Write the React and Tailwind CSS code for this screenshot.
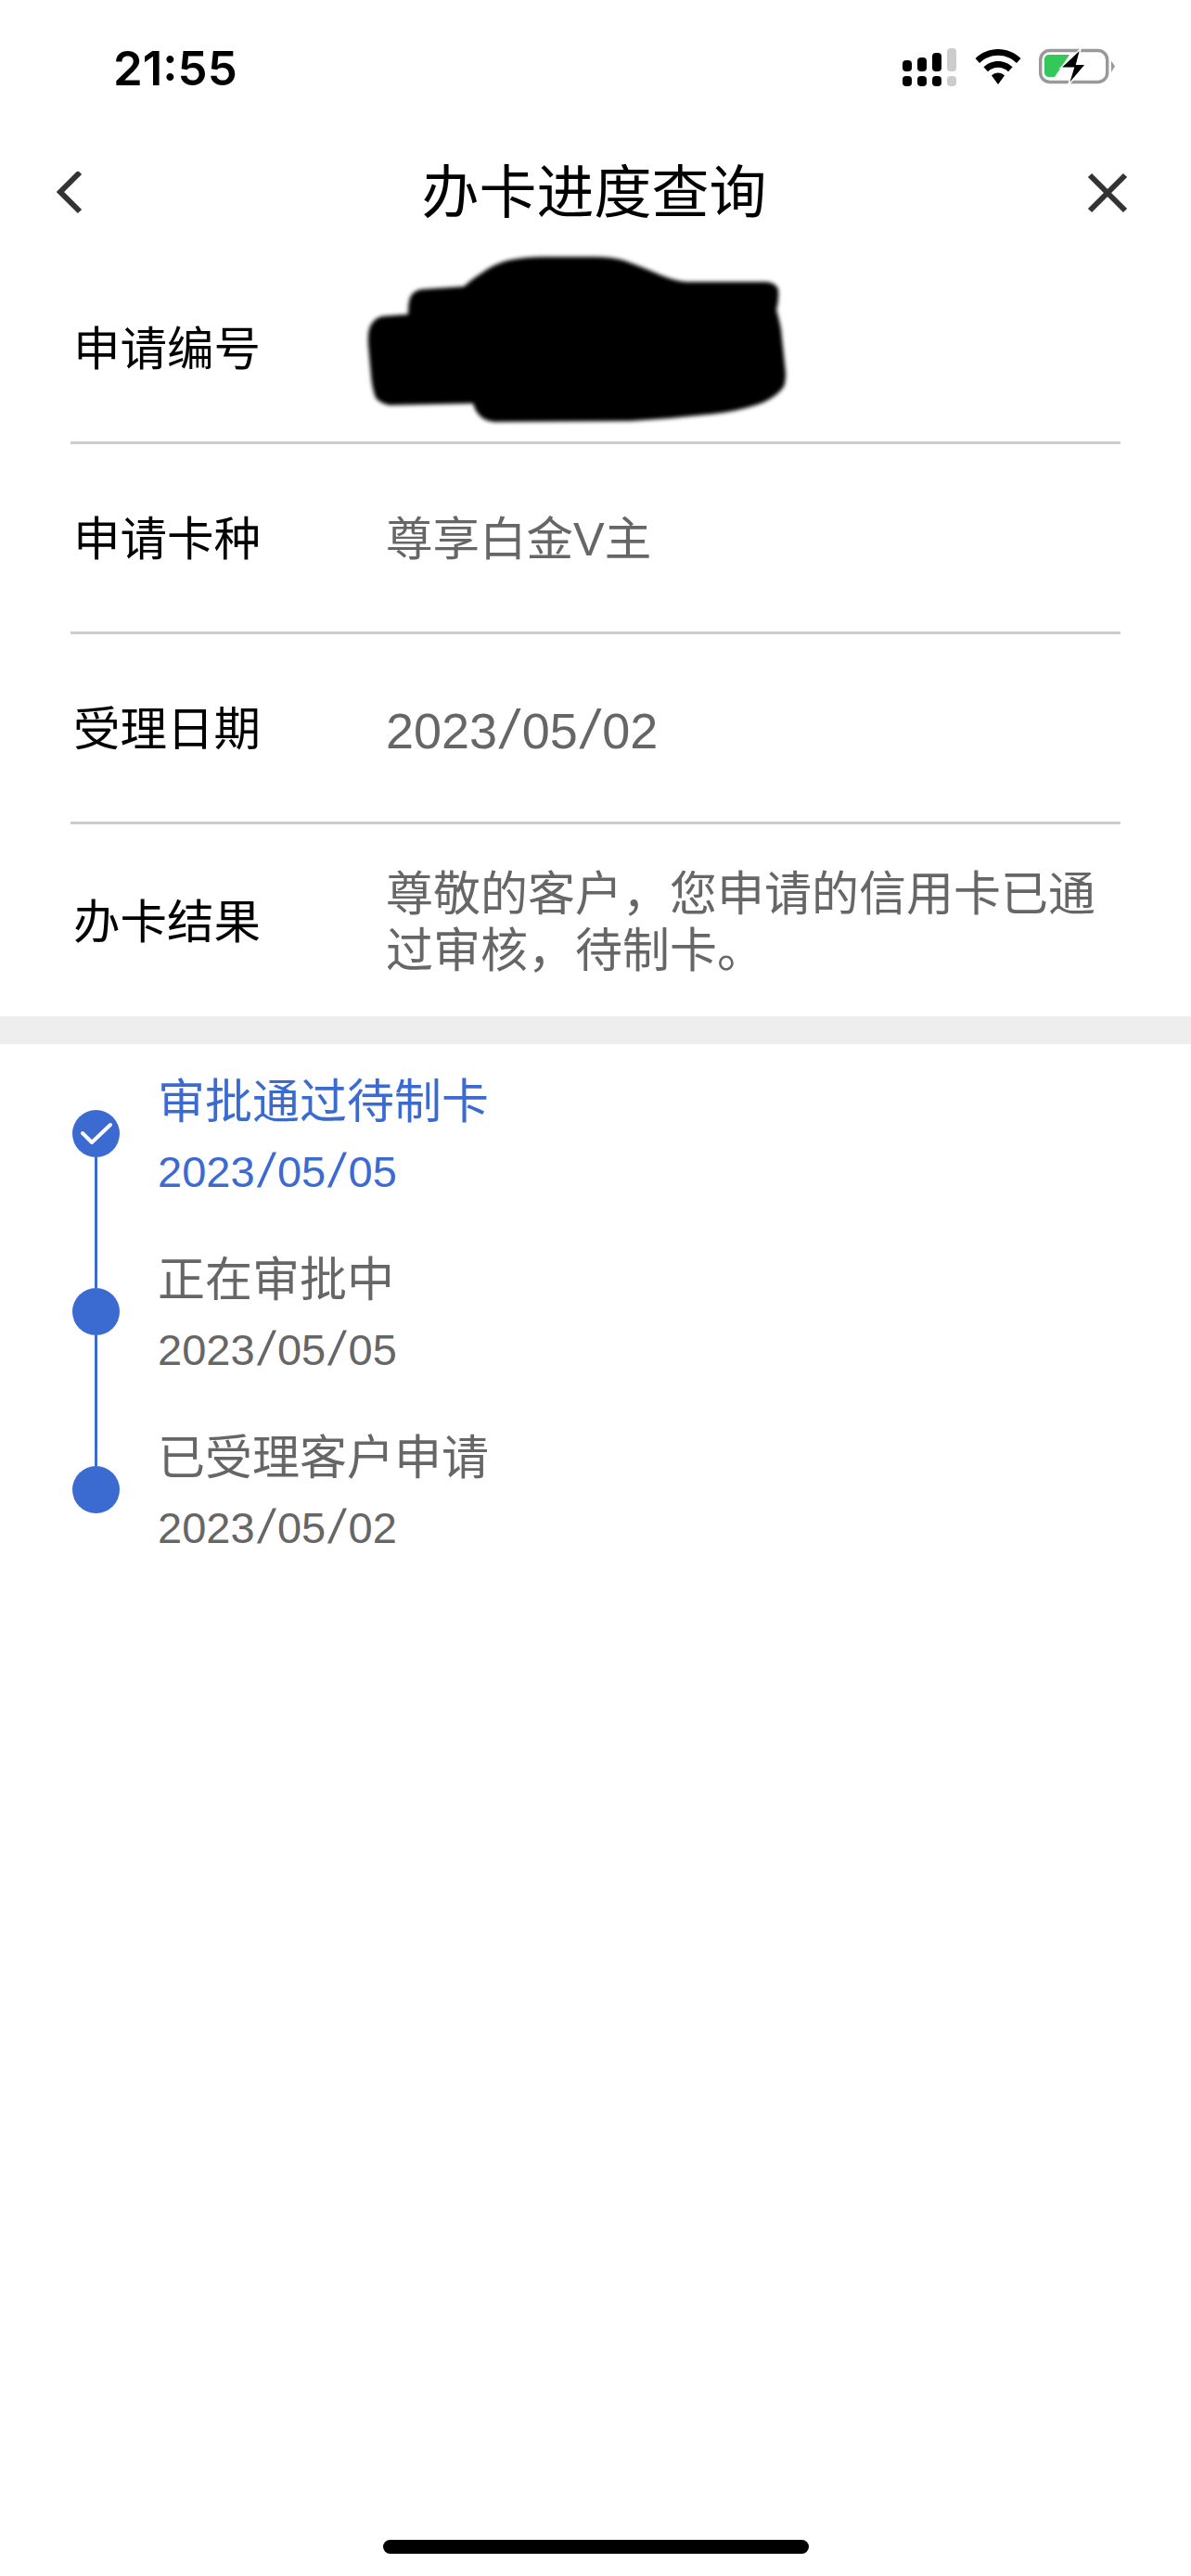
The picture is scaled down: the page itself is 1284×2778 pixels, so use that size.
import React from 'react';

const font = { fontFamily: '"Liberation Sans", "Noto Sans CJK SC", sans-serif' };

const rows = [
  { label: '申请卡种', value: '尊享白金V主' },
  { label: '受理日期', value: '2023/05/02', date: true },
];

const steps = [
  { title: '审批通过待制卡', date: '2023/05/05', active: true },
  { title: '正在审批中', date: '2023/05/05' },
  { title: '已受理客户申请', date: '2023/05/02', last: true },
];

// the slash in the dates is wider and taller than the Liberation one
function Slash() {
  return <span className="inline-block mx-[5px] text-[1.1em] leading-none -skew-x-[10deg]">/</span>;
}

function DateText({ value }) {
  const [y, m, d] = value.split('/');
  return (
    <>
      {y}<Slash />{m}<Slash />{d}
    </>
  );
}

function SignalIcon() {
  return (
    <svg width="60" height="42" viewBox="0 0 60 42">
      <rect x="1" y="13" width="10" height="12" rx="4" fill="#000" />
      <rect x="17" y="10" width="10" height="15" rx="4" fill="#000" />
      <rect x="33" y="5" width="10" height="20" rx="4" fill="#000" />
      <rect x="49" y="0" width="10" height="25" rx="4" fill="#ccc" />
      <rect x="1" y="30" width="10" height="11" rx="4" fill="#000" />
      <rect x="17" y="30" width="10" height="11" rx="4" fill="#000" />
      <rect x="33" y="30" width="10" height="11" rx="4" fill="#000" />
      <rect x="49" y="30" width="10" height="11" rx="4" fill="#ccc" />
    </svg>
  );
}

function WifiIcon() {
  return (
    <svg width="50" height="38" viewBox="0 0 50 38" className="mt-px">
      <path d="M25 0C15.500 0 7 3.800 0.500 10L5 15C10.300 9.900 17.300 6.800 25 6.800S39.700 9.900 45 15L49.500 10C43 3.800 34.500 0 25 0Z" fill="#000" />
      <path d="M25 13C19 13 13.500 15.400 9.400 19.300L14 24.200C16.900 21.400 20.800 19.700 25 19.700S33.100 21.400 36 24.200L40.600 19.300C36.500 15.400 31 13 25 13Z" fill="#000" />
      <path d="M25 25.500C22.300 25.500 19.800 26.600 18 28.400L25 38L32 28.400C30.200 26.600 27.700 25.500 25 25.500Z" fill="#000" />
    </svg>
  );
}

function BatteryIcon() {
  return (
    <svg width="82" height="42" viewBox="0 0 82 42">
      <rect x="1.700" y="2.500" width="72" height="34" rx="10" fill="none" stroke="#999" strokeWidth="3.400" />
      <path d="M78 13.500L82 19.500L78 26Z" fill="#999" />
      <path d="M11 7H33L17 31H11C8 31 6 29 6 26V12C6 9 8 7 11 7Z" fill="#34c759" />
      <path d="M45 0.700L23.300 21.300H37.300L31.700 39.700L50.700 17.300H40.700Z" fill="#000" stroke="#fff" strokeWidth="1.500" />
    </svg>
  );
}

function Redaction() {
  return (
    <svg width="470" height="200" viewBox="388 265 470 200" className="absolute left-[312px] top-[-7px] blur-[2px]">
      <path
        d="M397 370Q396 355 400 348Q405 340 413 339L440 337Q440 322 443 317Q447 311 455 310L500 307Q510 298 520 292Q532 283 547 279Q565 275 587 275H640Q660 275 673 279Q695 287 713 295Q728 301 740 302H827Q836 303 839 310Q840 322 837 332Q840 342 842 353L847 400Q847 410 845 415Q838 425 823 432Q805 439 780 443Q730 449 680 452L533 453Q523 452 518 447Q512 441 510 433L420 435Q410 433 405 427Q401 416 400 403Z"
        fill="#000"
      />
    </svg>
  );
}

function InfoRow({ label, children, last }) {
  return (
    <div className={`flex items-center pt-[4px] ${last ? 'h-[207px]' : 'h-[205px] border-b-[3px] border-[#cccccc]'}`}>
      <div className="w-[340px] pl-[3px] shrink-0 text-[50.5px] leading-[60px] text-black">{label}</div>
      {children}
    </div>
  );
}

export default function App() {
  return (
    <div style={font} className="w-[1284px] h-[2778px] bg-white flex flex-col overflow-hidden">
      {/* Status bar */}
      <div className="h-[144px] flex items-start justify-between pl-[122px] pr-[82px] pt-[42px]">
        <span className="text-[51px] leading-[60px] mt-[2px] font-semibold text-black" style={{ fontFamily: 'Inter, sans-serif' }}>21:55</span>
        <div className="flex items-start gap-[19px] pt-[10px]">
          <SignalIcon />
          <WifiIcon />
          <BatteryIcon />
        </div>
      </div>

      {/* Header */}
      <div className="h-[130px] flex items-center justify-between pl-[60px] pr-[66px]">
        <svg width="48" height="48" viewBox="0 0 48 48" fill="none" stroke="#333" strokeWidth="6">
          <path d="M26 1L5 22L26 43" />
        </svg>
        <div className="text-[62px] leading-[70px] text-black ml-[3px]">办卡进度查询</div>
        <svg width="48" height="48" viewBox="0 0 48 48" fill="none" stroke="#333" strokeWidth="6">
          <path d="M5 4L43 42M43 4L5 42" />
        </svg>
      </div>

      {/* Info rows */}
      <div className="px-[76px]">
        <div className="relative">
          <InfoRow label="申请编号" />
          <Redaction />
        </div>
        {rows.map((row) => (
          <InfoRow key={row.label} label={row.label}>
            <div className={`text-[#666666] ${row.date ? 'text-[54px]' : 'text-[50.5px]'} leading-[60px]`}>
              {row.date ? <DateText value={row.value} /> : row.value}
            </div>
          </InfoRow>
        ))}
        <InfoRow label="办卡结果" last>
          <div className="text-[51px] leading-[61px] text-[#666666]">尊敬的客户，您申请的信用卡已通过审核，待制卡。</div>
        </InfoRow>
      </div>

      <div className="h-[30px] bg-[#eeeeee] shrink-0" />

      {/* Timeline */}
      <div className="pt-[71px] pl-[78px]">
        {steps.map((step) => (
          <div key={step.title} className="flex h-[192px]">
            <div className="w-[51px] flex flex-col items-center shrink-0">
              <div className="w-[51px] h-[51px] rounded-full bg-[#3b6bd1] flex items-center justify-center shrink-0">
                {step.active && (
                  <svg width="36" height="26" viewBox="0 0 36 26" fill="none" stroke="#fff" strokeWidth="4" strokeLinecap="round" strokeLinejoin="round">
                    <path d="M3 12L13 22L33 3" />
                  </svg>
                )}
              </div>
              {!step.last && <div className="w-[3px] grow bg-[#3b6bd1]" />}
            </div>
            <div className={`ml-[41px] -mt-[38px] ${step.active ? 'text-[#3b6bd1]' : 'text-[#666666]'}`}>
              <div className="text-[51px] leading-[60px] whitespace-nowrap">{step.title}</div>
              <div className="text-[47px] leading-[60px] mt-[15px] whitespace-nowrap"><DateText value={step.date} /></div>
            </div>
          </div>
        ))}
      </div>

      {/* Home indicator */}
      <div className="mt-auto mb-[24px] mx-auto w-[459px] h-[15px] rounded-[8px] bg-black" />
    </div>
  );
}
